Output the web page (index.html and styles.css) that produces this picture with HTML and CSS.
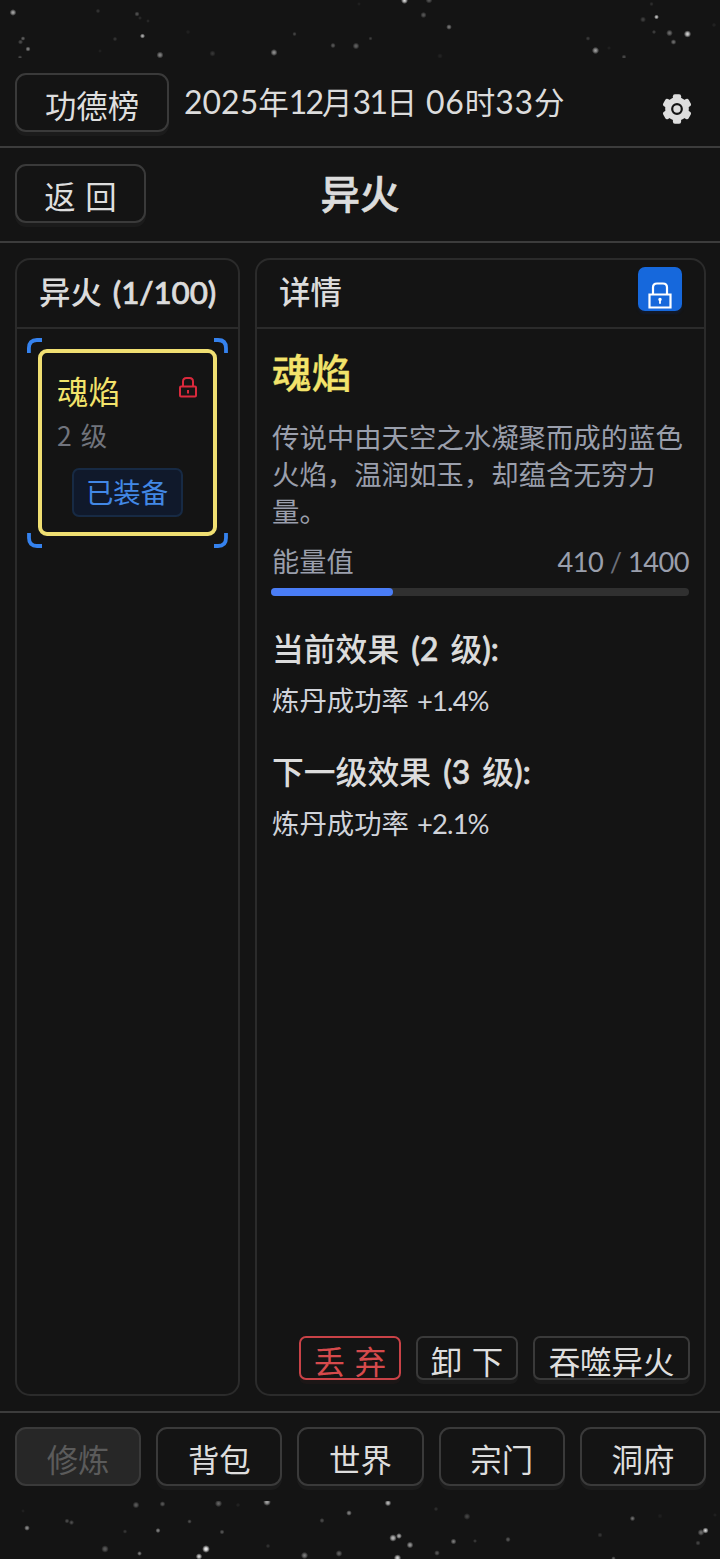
FILE: index.html
```html
<!DOCTYPE html>
<html lang="zh-CN">
<head>
<meta charset="utf-8">
<title>异火</title>
<link rel="stylesheet" href="styles.css">
</head>
<body>
<div class="app">
  <svg class="stars" viewBox="0 0 720 58" id="stars-top"></svg>

  <header class="topbar">
    <button class="btn btn-rank">功德榜</button>
    <div class="date"><i>2025</i>年<i class="month">12</i>月<i class="day">31</i>日<i class="time"> 06</i>时<i class="time">33</i>分</div>
    <svg class="gear" viewBox="0 0 28 30"><circle cx="14" cy="15" r="11.800"/><rect id="tooth" x="9.900" y="0.300" width="8.200" height="29.400" rx="2"/><use href="#tooth" transform="rotate(60 14 15)"/><use href="#tooth" transform="rotate(120 14 15)"/><circle class="hub" cx="14" cy="15" r="4.800"/></svg>
  </header>

  <div class="titlebar">
    <button class="btn btn-back">返 回</button>
    <h1 class="title">异火</h1>
  </div>

  <main class="main">
    <section class="panel list">
      <div class="panel-head"><span class="head-text">异火 <i class="count">(1/100)</i></span></div>
      <div class="list-body">
        <div class="selection">
          <svg class="corners" viewBox="0 0 202 210"><path d="M1.900 15V10q0-8 8-8H15M187 2h4q8 0 8 8v5M199 195v5q0 8-8 8h-4M15 208h-5q-8 0-8-8v-5"/></svg>
          <div class="card">
            <div class="card-top">
              <span class="card-name">魂焰</span>
              <svg class="lock-red" viewBox="0 0 18 21"><path d="M2 9.500h14q1 0 1 1v8q0 1-1 1H2q-1 0-1-1v-8q0-1 1-1zM4 9.500V4.500Q4 1 7.500 1h3Q14 1 14 4.500v5M9 13v3.500"/></svg>
            </div>
            <div class="card-level">2 级</div>
            <span class="tag">已装备</span>
          </div>
        </div>
      </div>
    </section>

    <section class="panel detail">
      <div class="panel-head detail-head">
        <span class="head-text">详情</span>
        <button class="lock-btn"><svg class="lock-white" viewBox="0 0 24 27"><path d="M1.500 12.500h21v13h-21zM5 12.500V5.500Q5 1.500 9 1.500h6q4 0 4 4v7"/><path class="keyhole" d="M10.300 17.500a1.700 1.700 0 1 1 2.600 1.500v2.800h-1.800v-2.800a1.700 1.700 0 0 1-.8-1.500z"/></svg></button>
      </div>
      <div class="detail-body">
        <h2 class="name">魂焰</h2>
        <p class="desc">传说中由天空之水凝聚而成的蓝色<br>火焰，温润如玉，却蕴含无穷力<br>量。</p>
        <div class="energy"><span>能量值</span><span class="num">410 <em>/</em> 1400</span></div>
        <div class="bar"><div class="fill"></div></div>
        <h3 class="effect-title">当前效果 <i>(2</i> 级<i>):</i></h3>
        <p class="effect">炼丹成功率 <i>+1.4%</i></p>
        <h3 class="effect-title">下一级效果 <i>(3</i> 级<i>):</i></h3>
        <p class="effect">炼丹成功率 <i>+2.1%</i></p>
      </div>
      <div class="actions">
        <button class="btn small danger">丢 弃</button>
        <button class="btn small">卸 下</button>
        <button class="btn small wide">吞噬异火</button>
      </div>
    </section>
  </main>

  <nav class="nav">
    <button class="btn disabled">修炼</button>
    <button class="btn">背包</button>
    <button class="btn">世界</button>
    <button class="btn">宗门</button>
    <button class="btn">洞府</button>
  </nav>
  <svg class="stars" viewBox="0 0 720 58" id="stars-bottom"></svg>
</div>
<script src="stars.js"></script>
</body>
</html>
```
FILE: styles.css
```css
* { box-sizing: border-box; }
body {
  margin: 0;
  background: #141414;
  color: #dcdcdc;
  font-family: "Noto Sans CJK SC", sans-serif;
  font-size: 31.4px;
}
i, em { font-style: normal; }
i { line-height: 0; }
button { font-family: inherit; }
h1, h2, h3, p { margin: 0; }
svg { display: block; }

.app { display: flex; flex-direction: column; height: 1559px; width: 720px; overflow: hidden; }
.stars { width: 720px; height: 58px; flex: none; fill: #fff; }

.btn {
  height: 59px;
  padding: 5px 0 0;
  border: 2px solid #3a3a3a;
  border-radius: 11px;
  background: #141414;
  color: #dedede;
  font-size: 31.4px;
  line-height: 46px;
  text-align: center;
  white-space: nowrap;
  word-spacing: 2.5px;
  box-shadow: 0 4px 0 #1b1b1b;
}

.topbar { display: flex; height: 90px; padding: 15px 15px 0; border-bottom: 2px solid #3c3c3c; flex: none; }
.btn-rank { width: 154px; }
.date { margin-left: 15px; line-height: 57px; white-space: nowrap; font-size: 30.5px; }
.date i { font-size: 32px; }
.date .month { letter-spacing: -1.9px; }
.date .day { letter-spacing: -1.6px; }
.date .time { letter-spacing: 0.8px; }
.date i, .num, .count, .effect-title i, .effect i { font-family: Lato, "Noto Sans CJK SC", sans-serif; }
.gear { width: 28px; height: 30px; margin: 20.5px 14.5px 0 auto; fill: #dedede; overflow: visible; }
.hub { stroke: #141414; stroke-width: 2.2; }

.titlebar { display: grid; grid-template-columns: 131px 1fr 131px; height: 95px; padding: 16px 15px 0; border-bottom: 2px solid #3c3c3c; flex: none; }
.title { font-size: 39.5px; line-height: 56px; font-weight: 500; text-align: center; -webkit-text-stroke: 0.6px currentColor; }

.main { display: flex; gap: 15px; height: 1168px; padding: 15px 14px 15px 15px; flex: none; }
.panel { border: 2px solid #2b2b2b; border-radius: 15px; display: flex; flex-direction: column; }
.list { width: 225px; }
.detail { flex: 1; }
.panel-head { height: 69px; border-bottom: 2px solid #2b2b2b; padding: 0 22px; display: flex; align-items: center; font-weight: 500; flex: none; }
.head-text { white-space: nowrap; line-height: 60px; margin-top: -5px; word-spacing: 4px; }
.count, .effect-title i { -webkit-text-stroke: 0.7px currentColor; }
.count { letter-spacing: -0.1px; }
.list-body { padding: 9px 10px; }
.selection { display: grid; width: 202px; height: 211px; }
.corners { grid-area: 1 / 1; width: 202px; height: 210px; fill: none; stroke: #3582ee; stroke-width: 3.8; }
.card { grid-area: 1 / 1; margin: 11px; width: 179px; height: 187px; border: 4px solid #f0df72; border-radius: 9px; padding: 14px 16px 0 15px; display: flex; flex-direction: column; }
.card-top { display: flex; justify-content: space-between; height: 47px; }
.card-name { color: #f3e36b; line-height: 48px; }
.lock-red { width: 18px; height: 21px; margin-top: 10px; fill: none; stroke: #d9293c; stroke-width: 2; }
.card-level { color: #71747d; font-size: 26.5px; line-height: 42px; word-spacing: 3px; }
.tag { width: 111px; height: 49px; margin: 12px auto 0; border: 2px solid #172a44; border-radius: 7px; background: #10192b; color: #4288e5; font-size: 27.4px; line-height: 43px; text-align: center; }

.detail-head { justify-content: space-between; }
.lock-btn { width: 44px; height: 44px; margin-top: -10px; padding: 15px 0 0; border: 0; border-radius: 7px; background: #1668dc; display: flex; justify-content: center; box-shadow: 0 3px 2px #111a2c; }
.lock-white { width: 24px; height: 27px; fill: none; stroke: #fff; stroke-width: 2.2; }
.keyhole { fill: #fff; stroke: none; }
.detail-body { padding: 13px 15px 0; flex: 1; }
.name { color: #f3e36b; font-size: 39.7px; line-height: 58px; font-weight: 500; -webkit-text-stroke: 0.3px currentColor; }
.desc { color: #9a9fac; font-size: 27.4px; line-height: 37px; margin-top: 18px; white-space: nowrap; }
.energy { display: flex; justify-content: space-between; color: #9a9fac; font-size: 27.2px; line-height: 44px; margin-top: 9px; }
.num { letter-spacing: -0.5px; line-height: 47px; height: 44px; }
.energy em { color: #6b6f79; }
.bar { height: 8px; border-radius: 4px; background: #303030; margin: 6px 0 0 -1px; }
.fill { width: 122px; height: 8px; border-radius: 4px; background: #4a7df6; }
.effect-title { font-size: 31.8px; font-weight: 500; line-height: 48px; margin-top: 27px; white-space: nowrap; word-spacing: 5px; }
.effect { color: #d0d3da; font-size: 27.4px; line-height: 40px; margin-top: 8px; white-space: nowrap; word-spacing: 2px; }
.effect i { letter-spacing: -0.9px; }
.actions { display: flex; justify-content: flex-end; gap: 15px; padding: 0 14px 14px 0; }
.small { width: 102px; height: 44px; border-radius: 7px; padding-top: 3px; line-height: 40px; }
.wide { width: 157px; }
.danger { color: #d64a4c; border-color: #c94247; box-shadow: 0 4px 0 #1c1616; }

.nav { display: grid; grid-template-columns: repeat(5, 1fr); gap: 15px; height: 90px; padding: 14px 14px 0 15px; border-top: 2px solid #3c3c3c; flex: none; }
.disabled { background: #272727; color: #5b5b5b; box-shadow: none; }
```
FILE: stars.js
```js
// Each star: x, y, radius, opacity
const topStars = [
  [13,12.5,2.6,.65],[98,11,1.8,.15],[137,14,2,.28],[140,18,1.6,.1],[148,21,1.5,.1],
  [23,38.5,1.8,.35],[20.5,42,2,.25],[28,49,2,.5],[20,57.5,1.8,.25],[115,39,1.8,.15],
  [142.5,36,2,.7],[160,55,2.7,.5],[212.5,53.5,2.4,.15],[188,32,1.8,.06],[274,52.5,2.7,.55],
  [294.5,34,1.7,.22],[333,45.5,2.1,.3],[356,46,2.6,.35],[404.5,0.5,2.7,.85],[429,0,2.7,.3],
  [423.5,15,2.4,.3],[449,27,2.2,.45],[370.5,38.5,1.6,.18],[440,56,2.2,.07],[588,38.5,1.8,.18],
  [595.5,50.5,2.8,.6],[624,57,1.9,.25],[609,48,1.6,.06],[651.5,4,1.7,.12],[643,19.5,2.3,.2],
  [656.5,17,1.9,.8],[654,32,1.7,.2],[669.5,33,2.6,.4],[687.5,34,2.8,.85],[673.5,42,2.2,.4],
  [714,25,1.8,.07],[100,51,1.5,.06],[359,4,1.5,.06]
];
const bottomStars = [
  [136,4,2.6,.32],[162.5,3,2.2,.3],[218.5,2.5,2.8,.35],[267,1,3,.65],[238,4,1.8,.07],
  [23,10,1.5,.06],[67,20,1.9,.25],[71.5,21.5,2,.25],[27,27,2.2,.55],[125,30.5,1.7,.16],
  [158,29.5,2,.5],[189.5,20.5,1.8,.25],[222,31,1.9,.3],[105,48,2.9,.32],[139.5,52.5,1.9,.45],
  [206,48,3,1],[199,55.5,2.5,.85],[268,45,1.8,.14],[322,19.5,2,.25],[349,12,2.2,.5],
  [304.5,54.5,2.8,.45],[339,52.5,2.6,.35],[388,2,2.5,.75],[436,8,1.8,.12],[467,15.5,2.6,.22],
  [393,37,2.9,.75],[399,35,2.3,.7],[410,44,2.6,.6],[397.5,57,2.8,.85],[453.5,40.5,2.3,.45],
  [475,40,1.6,.18],[437,52,2.2,.3],[508,38.5,2.1,.3],[613.5,57.5,1.8,.3],[632.5,17.5,2.1,.4],
  [600,34,2,.15],[660,15,2,.05],[698,42,2,.22],[701,31.5,2.6,.4],[705.5,29.5,2.4,.85],[715,14,1.6,.06]
];
function sky(id, stars) {
  const grad = '<radialGradient id="g-' + id + '"><stop offset="0" stop-color="#fff"/><stop offset=".4" stop-color="#fff" stop-opacity=".75"/><stop offset="1" stop-color="#fff" stop-opacity="0"/></radialGradient>';
  document.getElementById(id).innerHTML = grad + stars.map(s =>
    '<circle cx="' + s[0] + '" cy="' + s[1] + '" r="' + s[2] * 1.3 + '" opacity="' + s[3] + '" fill="url(#g-' + id + ')"/>').join('');
}
sky('stars-top', topStars);
sky('stars-bottom', bottomStars);
```
